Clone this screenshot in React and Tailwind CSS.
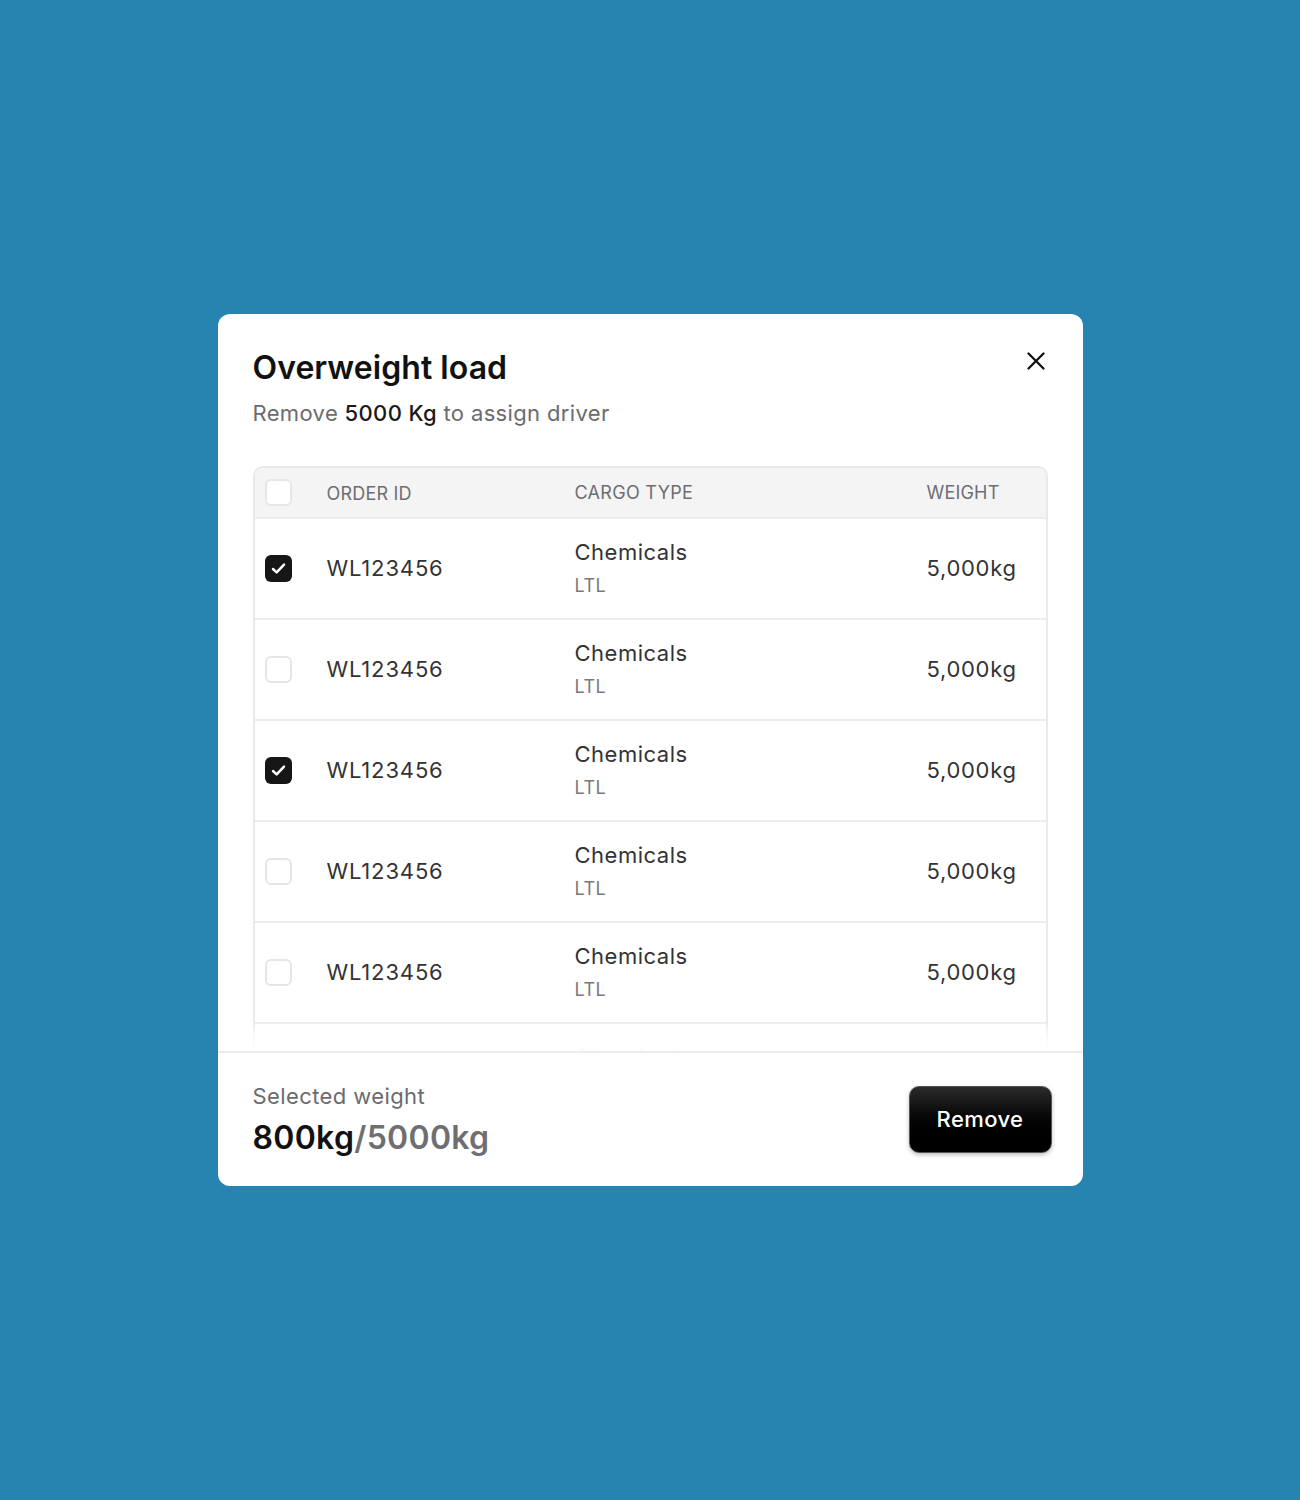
import React from "react";

const rows = [true, false, true, false, false, false];

function Check({ checked }) {
  if (checked) {
    return (
      <div className="w-[27px] h-[27px] rounded-[6px] bg-[#161616] flex items-center justify-center">
        <svg width="21" height="21" viewBox="0 0 16 16" fill="none">
          <path d="M3.8 8.4 L6.6 11.0 L12.2 5.1" stroke="white" strokeWidth="1.9" strokeLinecap="round" strokeLinejoin="round" />
        </svg>
      </div>
    );
  }
  return <div className="w-[27px] h-[27px] rounded-[6px] border-2 border-[#e6e6e8] bg-white" />;
}

export default function App() {
  return (
    <div
      className="w-[1300px] h-[1500px] bg-[#2783b0] flex items-start justify-center pt-[314px]"
      style={{ fontFamily: "Inter, 'Noto Sans', sans-serif" }}
    >
      <div className="relative w-[865px] h-[872px] bg-white rounded-[12px] flex flex-col overflow-hidden">
        <div className="absolute top-[38px] right-[38px] w-[18px] h-[18px]">
          <svg width="18" height="18" viewBox="0 0 18 18" fill="none">
            <path d="M1.5 1.5 L16.5 16.5 M16.5 1.5 L1.5 16.5" stroke="#111" strokeWidth="2.3" strokeLinecap="round" />
          </svg>
        </div>

        <div className="px-[35px] pt-[34px]">
          <h1 className="text-[32px] leading-[40px] font-semibold text-[#111111] tracking-[0.05px]">Overweight load</h1>
          <p className="mt-[10px] text-[22px] leading-[30px] text-[#6b6b6e] tracking-[0.35px]">
            Remove <span className="font-medium text-[#1a1a1a]">5000 Kg</span> to assign driver
          </p>
        </div>

        <div className="relative mt-[38px] px-[35px] h-[585px] overflow-hidden">
          <div className="border-2 border-[#e9e9eb] rounded-t-[10px] w-[795px]">
            <div className="grid grid-cols-[72px_248px_352px_1fr] items-center h-[49px] bg-[#f4f4f5] rounded-t-[8px]">
              <div className="pl-[10px]"><Check checked={false} /></div>
              <div className="text-[18px] text-[#6e6e72] pt-[2px] tracking-[0.2px]">ORDER ID</div>
              <div className="text-[18px] text-[#6e6e72] tracking-[0.3px]">CARGO TYPE</div>
              <div className="text-[18px] text-[#6e6e72] tracking-[0.2px]">WEIGHT</div>
            </div>
            {rows.map((c, i) => (
              <div key={i} className="grid grid-cols-[72px_248px_352px_1fr] items-center h-[101px] border-t-2 border-[#ececee]">
                <div className="pl-[10px]"><Check checked={c} /></div>
                <div className="text-[22px] text-[#333336] tracking-[0.85px]">WL123456</div>
                <div className="flex flex-col pb-[2px]">
                  <span className="text-[22px] leading-[30px] text-[#333336] tracking-[0.5px]">Chemicals</span>
                  <span className="text-[18px] leading-[26px] mt-[6px] text-[#79797c] tracking-[0.5px]">LTL</span>
                </div>
                <div className="text-[22px] text-[#333336] tracking-[0.7px]">5,000kg</div>
              </div>
            ))}
          </div>
          <div className="absolute left-0 right-0 bottom-0 h-[30px] bg-gradient-to-b from-white/0 via-white/70 to-white" />
        </div>

        <div className="flex-1 border-t-2 border-[#ececee] flex items-center justify-between pl-[35px] pr-[31px]">
          <div className="flex flex-col">
            <span className="text-[22px] leading-[30px] text-[#6b6b6e] tracking-[0.4px]">Selected weight</span>
            <span className="mt-[7px] text-[32px] leading-[40px] font-semibold text-[#111111] tracking-[0.3px]">
              800kg<span className="text-[#6f6f73]">/5000kg</span>
            </span>
          </div>
          <button className="w-[143px] h-[67px] rounded-[10px] bg-gradient-to-b from-[#2b2b2b] via-[#050505] to-black border border-[#555] shadow-[0_2px_4px_rgba(0,0,0,0.25)] text-white text-[22px] font-medium tracking-[0.4px]">
            Remove
          </button>
        </div>
      </div>
    </div>
  );
}
